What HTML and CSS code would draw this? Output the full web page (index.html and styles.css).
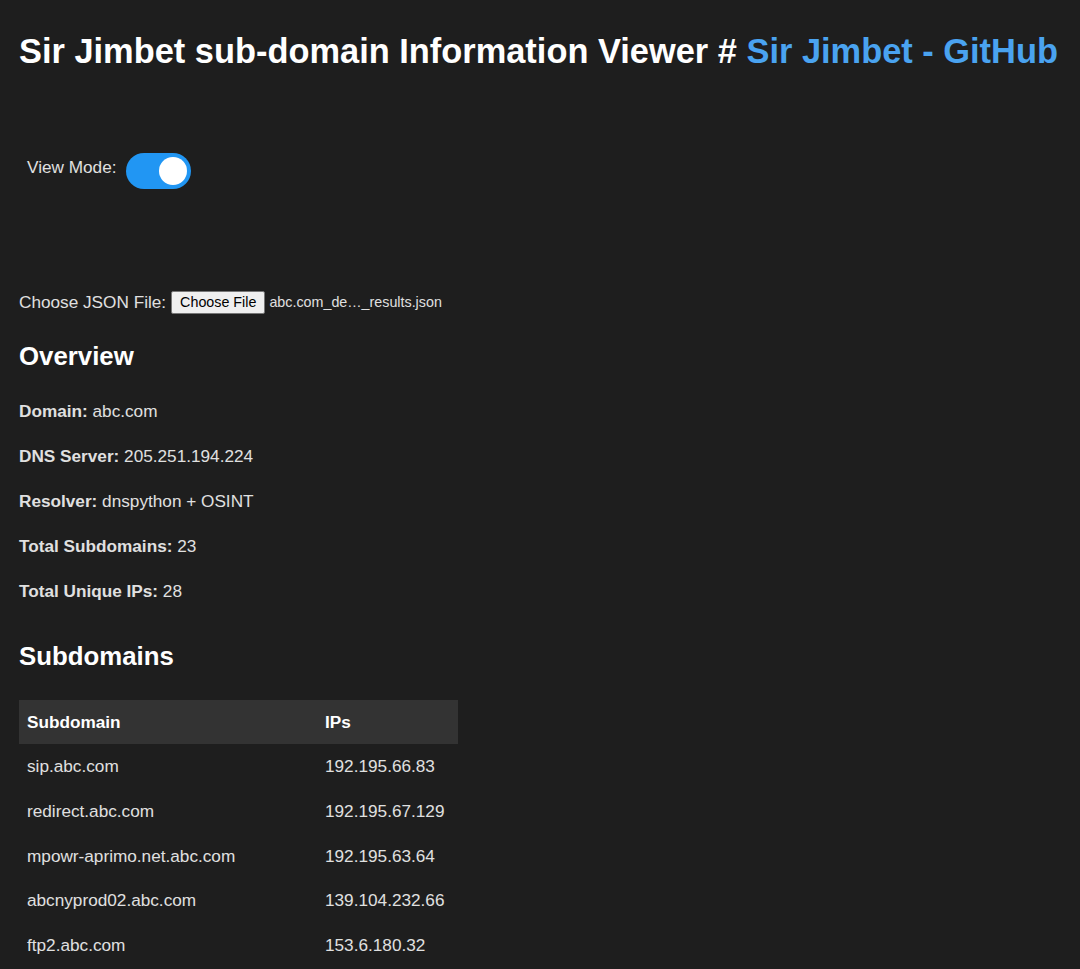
FILE: index.html
```html
<!DOCTYPE html>
<html>
<head>
<meta charset="utf-8">
<title>Sir Jimbet sub-domain Information Viewer</title>
<link rel="stylesheet" href="styles.css">
</head>
<body>
<h1 class="title">Sir Jimbet sub-domain Information Viewer # <a class="gh" href="#">Sir Jimbet - GitHub</a></h1>

<div class="mode-row">
  <span class="mode-label">View Mode:</span>
  <span class="toggle"><span class="knob"></span></span>
</div>

<div class="file-row">
  <span class="file-label">Choose JSON File:</span>
  <span class="file-btn">Choose File</span>
  <span class="file-name">abc.com_de…_results.json</span>
</div>

<h2 class="section">Overview</h2>
<p class="info"><b>Domain:</b> abc.com</p>
<p class="info"><b>DNS Server:</b> 205.251.194.224</p>
<p class="info"><b>Resolver:</b> dnspython + OSINT</p>
<p class="info"><b>Total Subdomains:</b> 23</p>
<p class="info"><b>Total Unique IPs:</b> 28</p>

<h2 class="section sub">Subdomains</h2>
<table class="subs">
  <thead>
    <tr><th class="c1">Subdomain</th><th>IPs</th></tr>
  </thead>
  <tbody>
    <tr><td>sip.abc.com</td><td>192.195.66.83</td></tr>
    <tr><td>redirect.abc.com</td><td>192.195.67.129</td></tr>
    <tr><td>mpowr-aprimo.net.abc.com</td><td>192.195.63.64</td></tr>
    <tr><td>abcnyprod02.abc.com</td><td>139.104.232.66</td></tr>
    <tr><td>ftp2.abc.com</td><td>153.6.180.32</td></tr>
  </tbody>
</table>
</body>
</html>
```
FILE: styles.css
```css
html, body {
  background: #1e1e1e;
}
body {
  margin: 0;
  padding: 0 19px;
  color: #e0e0e0;
  font-family: "Liberation Sans", Arial, sans-serif;
  font-size: 17.2px;
}
.title {
  margin: 31px 0 0;
  font-size: 34.4px;
  line-height: 40px;
  font-weight: bold;
  color: #ffffff;
  white-space: nowrap;
}
.gh {
  color: #4aa3f0;
  text-decoration: none;
}
.mode-row {
  display: flex;
  align-items: center;
  gap: 9px;
  margin-top: 82px;
  padding-left: 8px;
  height: 36px;
}
.mode-label {
  color: #e0e0e0;
  line-height: 20px;
  position: relative;
  top: -4px;
}
.toggle {
  position: relative;
  display: inline-block;
  width: 65px;
  height: 36px;
  border-radius: 18px;
  background: #2196f3;
}
.knob {
  position: absolute;
  right: 4px;
  top: 4px;
  width: 28px;
  height: 28px;
  border-radius: 50%;
  background: #ffffff;
}
.file-row {
  display: flex;
  align-items: center;
  margin-top: 101px;
  height: 24px;
}
.file-label {
  margin-right: 5px;
  line-height: 20px;
}
.file-btn {
  display: inline-block;
  box-sizing: border-box;
  height: 23px;
  line-height: 21px;
  padding: 0 8px;
  background: #efefef;
  color: #000;
  border: 1px solid #767676;
  border-radius: 2px;
  font-size: 14.3px;
}
.file-name {
  margin-left: 4px;
  font-size: 14.3px;
  color: #e0e0e0;
}
.section {
  margin: 27px 0 0;
  font-size: 25.8px;
  font-weight: bold;
  color: #ffffff;
  line-height: 30px;
}
.info {
  margin: 25px 0 0;
  line-height: 20px;
}
.section + .info {
  margin-top: 30px;
}
.info b {
  font-weight: bold;
}
.section.sub {
  margin-top: 40px;
}
.subs {
  margin-top: 29px;
  border-collapse: collapse;
  width: 439px;
}
.subs th {
  background: #333333;
  color: #ffffff;
  text-align: left;
  padding: 12px 8px;
  line-height: 20px;
  font-weight: bold;
}
.subs th.c1 {
  width: 282px;
}
.subs td {
  padding: 12px 8px 12.8px;
  line-height: 20px;
  color: #e0e0e0;
}
```
